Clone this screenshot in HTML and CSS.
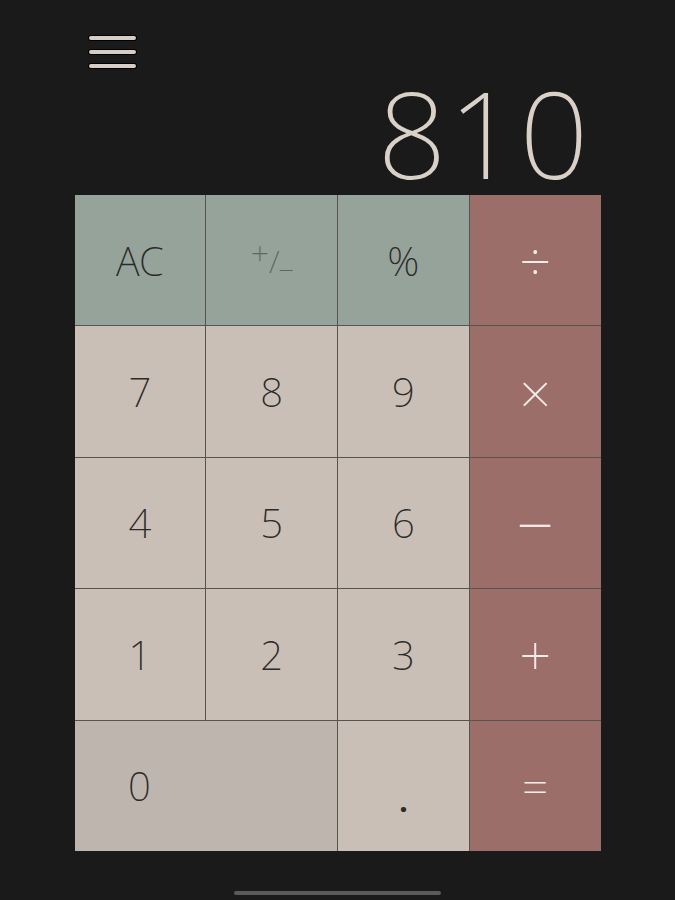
FILE: index.html
```html
<!DOCTYPE html>
<html lang="en">
<head>
    <meta charset="UTF-8">
    <meta name="viewport" content="width=device-width, initial-scale=1.0">
    <title>Calculator</title>
    <link rel="stylesheet" href="styles.css">
</head>
<body>
    <main class="calculator">
        <header class="top-bar">
            <button class="menu" aria-label="Menu">
                <span></span>
                <span></span>
                <span></span>
            </button>
        </header>

        <div class="display">810</div>

        <section class="keypad">
            <button class="key fn">AC</button>
            <button class="key fn sign"><span class="sup">+</span>/<span class="sub">_</span></button>
            <button class="key fn">%</button>
            <button class="key op">÷</button>

            <button class="key">7</button>
            <button class="key">8</button>
            <button class="key">9</button>
            <button class="key op">×</button>

            <button class="key">4</button>
            <button class="key">5</button>
            <button class="key">6</button>
            <button class="key op minus">−</button>

            <button class="key">1</button>
            <button class="key">2</button>
            <button class="key">3</button>
            <button class="key op">+</button>

            <button class="key zero"><span>0</span></button>
            <button class="key dot">.</button>
            <button class="key op equals">=</button>
        </section>

        <div class="home-bar"></div>
    </main>
</body>
</html>
```

FILE: styles.css
```css
/* Estilo geral */
body {
    background-color: #1a1a1a;
    font-family: "Noto Sans", "Open Sans", sans-serif;
    margin: 0;
    padding: 0;
}

.calculator {
    width: 526px;
    margin: 0 auto;
    height: 900px;
    display: flex;
    flex-direction: column;
}

.top-bar {
    padding: 36px 0 0 14px;
    height: 37px;
}

.menu {
    background: none;
    border: none;
    padding: 0;
    width: 47px;
    display: flex;
    flex-direction: column;
    gap: 10px;
}

.menu span {
    display: block;
    height: 4px;
    border-radius: 2px;
    background-color: #d6cec6;
    box-shadow: 0 0 0 1px #000;
}

.display {
    color: #d9d1c7;
    font-size: 121px;
    font-weight: 250;
    text-align: right;
    line-height: 118px;
    padding-right: 10px;
    letter-spacing: 2px;
}

.keypad {
    display: grid;
    grid-template-columns: repeat(4, 1fr);
    grid-auto-rows: 130.4px;
    gap: 1px;
    background-color: #57534f;
    margin-top: 4px;
}

.key {
    border: none;
    padding: 0;
    font-family: inherit;
    font-size: 40px;
    font-weight: 200;
    color: #2b2a28;
    background-color: #c9bfb6;
}

.key.fn {
    background-color: #96a39a;
}

.key.sign {
    color: #5f6762;
    font-size: 32px;
}

.sign .sup {
    position: relative;
    top: -8px;
}

.sign .sub {
    position: relative;
    top: -6px;
}

.key.op {
    background-color: #9b6e69;
    color: #f3ebe7;
    font-size: 56px;
}

.key.minus {
    font-size: 66px;
}

.key.equals {
    font-size: 46px;
}

.key.zero {
    grid-column: span 2;
    background-color: #bdb5ae;
    text-align: left;
}

.key.zero span {
    display: inline-block;
    width: 130px;
    text-align: center;
}

.key.dot {
    padding-top: 30px;
    font-weight: 700;
    font-size: 30px;
}

.home-bar {
    width: 207px;
    height: 4px;
    border-radius: 2px;
    background-color: #5a5a5a;
    margin: 40px auto 0;
}
```
